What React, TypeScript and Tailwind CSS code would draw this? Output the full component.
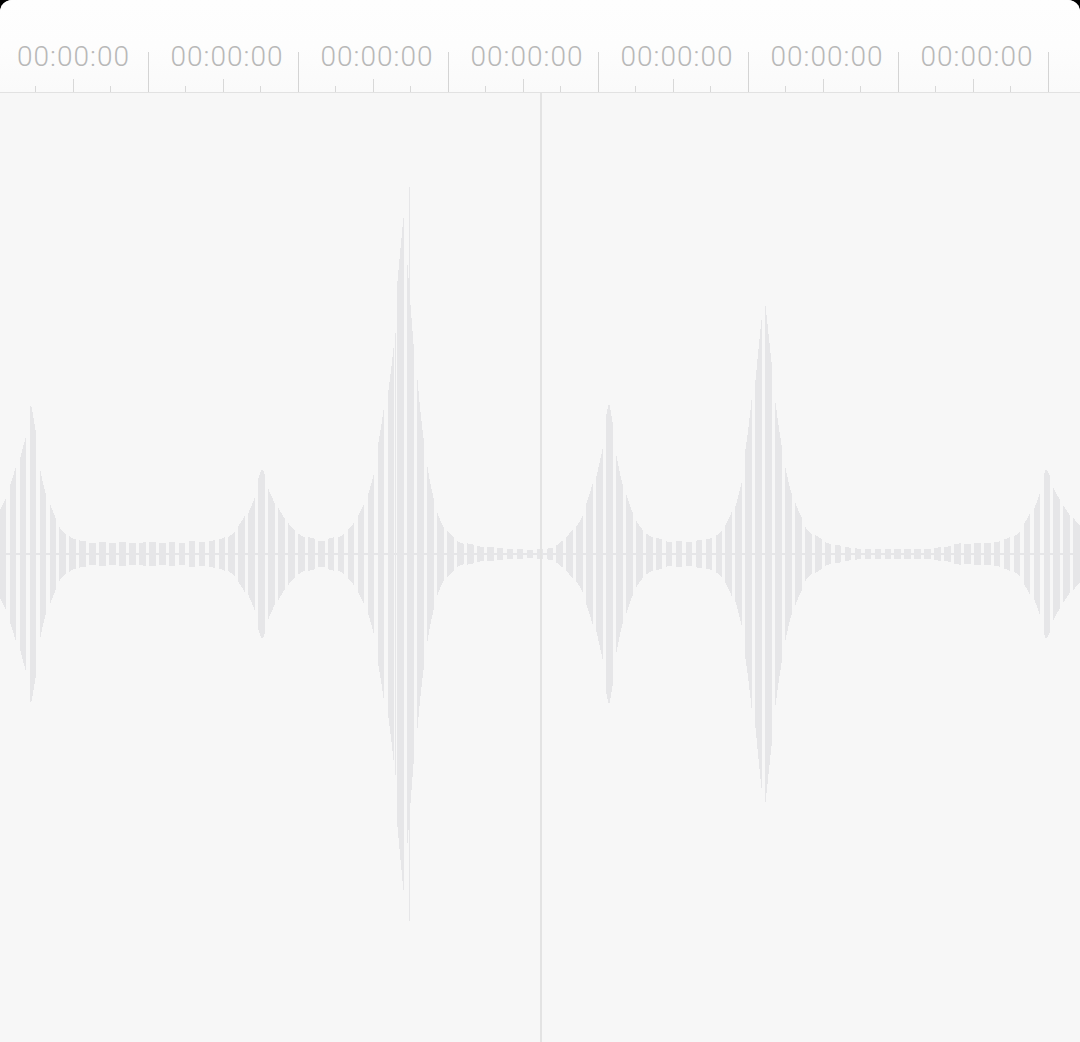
const SEGMENTS = 7;
const CENTER = 461;

type Peak = { c: number; a: number; wl: number; wr: number };

const peaks: Peak[] = [
  { c: 31, a: 130, wl: 24, wr: 16 },
  { c: 262, a: 70, wl: 17, wr: 22 },
  { c: 405, a: 320, wl: 23, wr: 17 },
  { c: 609, a: 131, wl: 19, wr: 17 },
  { c: 763, a: 248, wl: 17, wr: 20 },
  { c: 1046, a: 70, wl: 17, wr: 25 },
];

const basePoints: [number, number][] = [
  [0, 11], [100, 11], [200, 12], [300, 10], [470, 8], [500, 6], [525, 4],
  [555, 4], [570, 10], [650, 12], [700, 12], [820, 9], [860, 5], [930, 5],
  [960, 10], [1080, 12],
];

function base(x: number) {
  for (let i = 0; i < basePoints.length - 1; i++) {
    const [x0, y0] = basePoints[i];
    const [x1, y1] = basePoints[i + 1];
    if (x >= x0 && x <= x1) return y0 + ((x - x0) / (x1 - x0)) * (y1 - y0);
  }
  return 10;
}

function amp(x: number) {
  let v = base(x);
  for (const p of peaks) {
    const d = x - p.c;
    const w = d < 0 ? p.wl : p.wr;
    v += p.a * Math.exp(-Math.pow(Math.abs(d) / w, 1.25));
  }
  return v;
}

// one 1px column at a time, grouped in bars of ~6.6px every ~9.94px
function wavePath() {
  let d = "";
  for (let x = 0; x < 1080; x++) {
    const frac = (x + 0.64) % 9.94;
    if (frac >= 6.6) continue;
    const bar = Math.floor((x + 0.64) / 9.94);
    const jitter = 1 + 0.06 * Math.sin(bar * 2.7);
    const a = Math.max(2, Math.round(amp(x + 0.5) * jitter));
    d += `M${x} ${CENTER - a}h1v${a * 2}h-1z`;
  }
  return d;
}

function Segment({ first }: { first: boolean }) {
  return (
    <div className="w-[150px] h-full shrink-0 flex items-end">
      <div className="flex-1 h-full flex flex-col">
        <div
          className={
            first
              ? "pt-[43px] text-center text-[28px] leading-none font-light tracking-[1px] text-[#b8b8b8] font-['Roboto',sans-serif]"
              : "pt-[43px] pl-[7px] text-center text-[28px] leading-none font-light tracking-[1px] text-[#b8b8b8] font-['Roboto',sans-serif]"
          }
        >
          00:00:00
        </div>
        <div className="mt-auto grid grid-cols-4 items-end h-[13px]">
          <div className="h-[6px] border-r border-[#d8d8d8]" />
          <div className="h-[13px] border-r border-[#d8d8d8]" />
          <div className="h-[6px] border-r border-[#d8d8d8]" />
          <div />
        </div>
      </div>
      <div className="w-px h-[40px] bg-[#d4d4d4]" />
    </div>
  );
}

export default function App() {
  const d = wavePath();
  return (
    <div className="min-h-screen bg-black">
      <div className="h-[1042px] rounded-t-xl overflow-hidden flex flex-col bg-[#f7f7f7]">
        <div className="h-[93px] shrink-0 border-b border-[#e2e2e2] bg-gradient-to-b from-[#fefefe] via-[#fdfdfd] to-[#fafafa]">
          <div className="flex h-full ml-[-1px]">
            {Array.from({ length: SEGMENTS }).map((_, i) => (
              <Segment key={i} first={i === 0} />
            ))}
          </div>
        </div>
        <div className="flex-1">
          <svg width="1080" height="949" viewBox="0 0 1080 949" shapeRendering="crispEdges" className="block">
            <rect x="0" y={CENTER - 1} width="1080" height="2" fill="#e6e6e8" />
            <path d={d} fill="#e6e6e8" />
            <rect x="409" y={CENTER - 367} width="1" height={734} fill="#e6e6e8" />
            <rect x="395" y={CENTER - 221} width="1" height={442} fill="#e6e6e8" />
            <rect x="540" y="0" width="2" height="949" fill="#e3e3e3" />
          </svg>
        </div>
      </div>
    </div>
  );
}
